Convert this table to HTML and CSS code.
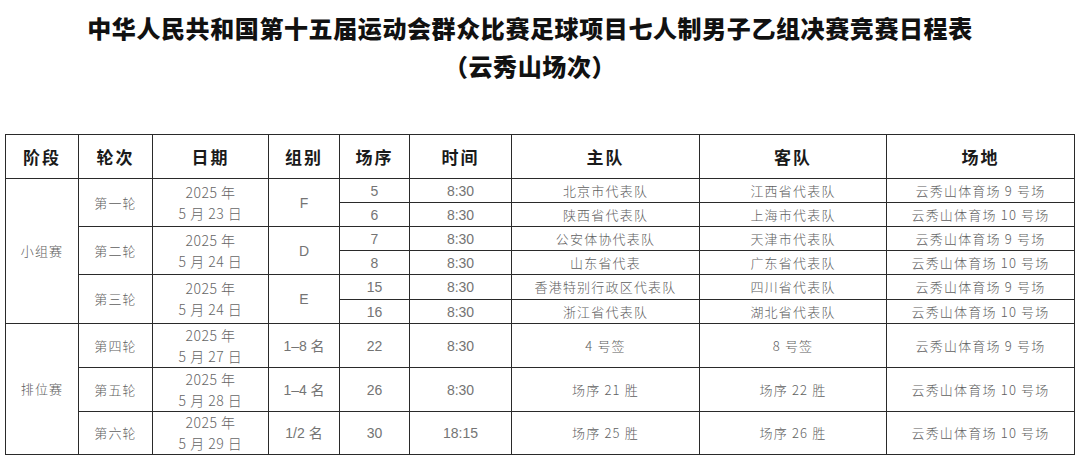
FILE: index.html
```html
<!DOCTYPE html>
<html lang="zh-CN">
<head>
<meta charset="utf-8">
<title>竞赛日程表</title>
<link rel="stylesheet" href="styles.css">
</head>
<body>
<div class="title">
  <div class="t1">中华人民共和国第十五届运动会群众比赛足球项目七人制男子乙组决赛竞赛日程表</div>
  <div class="t2">（云秀山场次）</div>
</div>
<table class="sched">
  <colgroup>
    <col class="c1"><col class="c2"><col class="c3"><col class="c4"><col class="c5"><col class="c6"><col class="c7"><col class="c8"><col class="c9">
  </colgroup>
  <thead>
    <tr class="hrow">
      <th>阶段</th><th>轮次</th><th>日期</th><th>组别</th><th>场序</th><th>时间</th><th>主队</th><th>客队</th><th>场地</th>
    </tr>
  </thead>
  <tbody>
    <tr class="r24">
      <td rowspan="6">小组赛</td>
      <td rowspan="2">第一轮</td>
      <td rowspan="2" class="date">2025 年<br>5 月 23 日</td>
      <td rowspan="2" class="num">F</td>
      <td class="num">5</td><td class="num">8:30</td>
      <td>北京市代表队</td><td>江西省代表队</td><td>云秀山体育场 9 号场</td>
    </tr>
    <tr class="r24">
      <td class="num">6</td><td class="num">8:30</td>
      <td>陕西省代表队</td><td>上海市代表队</td><td>云秀山体育场 10 号场</td>
    </tr>
    <tr class="r24">
      <td rowspan="2">第二轮</td>
      <td rowspan="2" class="date">2025 年<br>5 月 24 日</td>
      <td rowspan="2" class="num">D</td>
      <td class="num">7</td><td class="num">8:30</td>
      <td>公安体协代表队</td><td>天津市代表队</td><td>云秀山体育场 9 号场</td>
    </tr>
    <tr class="r24">
      <td class="num">8</td><td class="num">8:30</td>
      <td>山东省代表</td><td>广东省代表队</td><td>云秀山体育场 10 号场</td>
    </tr>
    <tr class="r25">
      <td rowspan="2">第三轮</td>
      <td rowspan="2" class="date">2025 年<br>5 月 24 日</td>
      <td rowspan="2" class="num">E</td>
      <td class="num">15</td><td class="num">8:30</td>
      <td>香港特别行政区代表队</td><td>四川省代表队</td><td>云秀山体育场 9 号场</td>
    </tr>
    <tr class="r24">
      <td class="num">16</td><td class="num">8:30</td>
      <td>浙江省代表队</td><td>湖北省代表队</td><td>云秀山体育场 10 号场</td>
    </tr>
    <tr class="r44">
      <td rowspan="3">排位赛</td>
      <td>第四轮</td>
      <td class="date">2025 年<br>5 月 27 日</td>
      <td class="num">1–8 名</td>
      <td class="num">22</td><td class="num">8:30</td>
      <td>4 号签</td><td>8 号签</td><td>云秀山体育场 9 号场</td>
    </tr>
    <tr class="r44">
      <td>第五轮</td>
      <td class="date">2025 年<br>5 月 28 日</td>
      <td class="num">1–4 名</td>
      <td class="num">26</td><td class="num">8:30</td>
      <td>场序 21 胜</td><td>场序 22 胜</td><td>云秀山体育场 10 号场</td>
    </tr>
    <tr class="r43">
      <td>第六轮</td>
      <td class="date">2025 年<br>5 月 29 日</td>
      <td class="num">1/2 名</td>
      <td class="num">30</td><td class="num">18:15</td>
      <td>场序 25 胜</td><td>场序 26 胜</td><td>云秀山体育场 10 号场</td>
    </tr>
  </tbody>
</table>
</body>
</html>
```

FILE: styles.css
```css
html, body {
  margin: 0;
  padding: 0;
  background: #ffffff;
}

body {
  font-family: "Noto Sans CJK SC", "Liberation Sans", sans-serif;
  color: #111;
}

.title {
  padding: 9px 20px 0 0;
  text-align: center;
  font-weight: 900;
  font-size: 24px;
  line-height: 38px;
  letter-spacing: 0.6px;
  color: #111;
}

.sched {
  margin: 49px 0 0 5px;
  width: 1070px;
  border-collapse: collapse;
  table-layout: fixed;
}

.c1 { width: 73px; }
.c2 { width: 74px; }
.c3 { width: 116px; }
.c4 { width: 71px; }
.c5 { width: 70px; }
.c6 { width: 102px; }
.c7 { width: 188px; }
.c8 { width: 187px; }
.c9 { width: 188px; }

.sched th,
.sched td {
  border: 1px solid #2a2a2a;
  padding: 0;
  text-align: center;
  vertical-align: middle;
  overflow: visible;
  white-space: nowrap;
}

.hrow {
  height: 44px;
}

.sched th {
  font-weight: 700;
  font-size: 17px;
  letter-spacing: 2px;
  color: #1a1a1a;
}

.sched td {
  font-weight: 300;
  font-size: 13px;
  letter-spacing: 1.2px;
  color: #5e5e5e;
  line-height: 20px;
}

.sched td.num {
  font-family: "Liberation Sans", "Noto Sans CJK SC", sans-serif;
  font-size: 14px;
  letter-spacing: 0;
  font-weight: 400;
  color: #747474;
}

.sched td.date {
  font-size: 14px;
  letter-spacing: 0.5px;
  line-height: 21px;
  color: #666;
}

.r24 { height: 24px; }
.r25 { height: 25px; }
.r44 { height: 44px; }
.r43 { height: 43px; }
```
